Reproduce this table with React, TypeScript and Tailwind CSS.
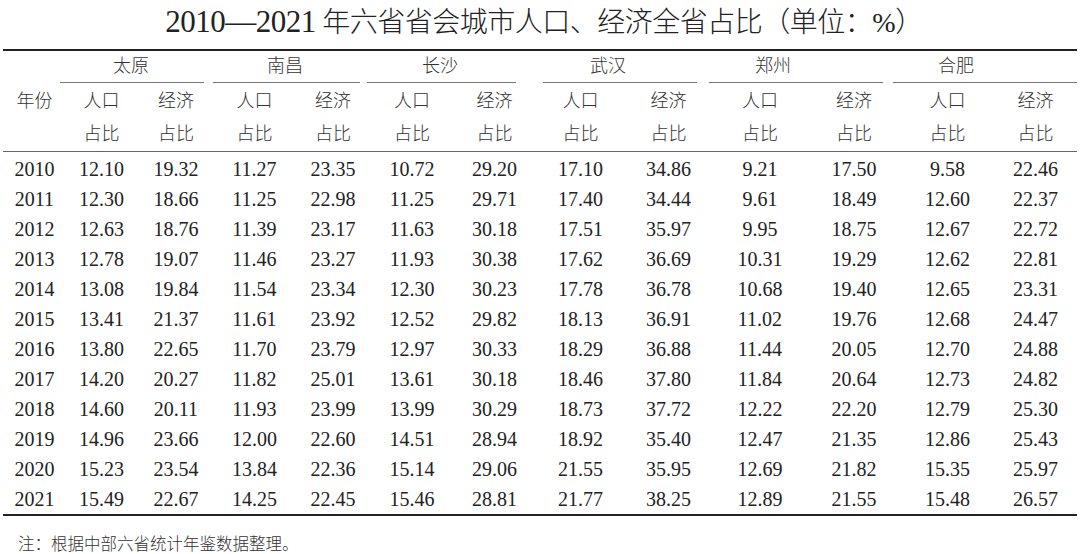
const cities = [
  { name: "太原", gap: "ml-[57px]", w: "w-[144px]", pl: "pl-[53px]" },
  { name: "南昌", gap: "ml-[9px]", w: "w-[147px]", pl: "pl-[54px]" },
  { name: "长沙", gap: "ml-[7px]", w: "w-[149px]", pl: "pl-[55px]" },
  { name: "武汉", gap: "ml-[27px]", w: "w-[154px]", pl: "pl-[47px]" },
  { name: "郑州", gap: "ml-[12px]", w: "w-[174px]", pl: "pl-[46px]" },
  { name: "合肥", gap: "ml-[10px]", w: "w-[184px]", pl: "pl-[45px]" },
];

const rows: string[][] = [
  ["2010", "12.10", "19.32", "11.27", "23.35", "10.72", "29.20", "17.10", "34.86", "9.21", "17.50", "9.58", "22.46"],
  ["2011", "12.30", "18.66", "11.25", "22.98", "11.25", "29.71", "17.40", "34.44", "9.61", "18.49", "12.60", "22.37"],
  ["2012", "12.63", "18.76", "11.39", "23.17", "11.63", "30.18", "17.51", "35.97", "9.95", "18.75", "12.67", "22.72"],
  ["2013", "12.78", "19.07", "11.46", "23.27", "11.93", "30.38", "17.62", "36.69", "10.31", "19.29", "12.62", "22.81"],
  ["2014", "13.08", "19.84", "11.54", "23.34", "12.30", "30.23", "17.78", "36.78", "10.68", "19.40", "12.65", "23.31"],
  ["2015", "13.41", "21.37", "11.61", "23.92", "12.52", "29.82", "18.13", "36.91", "11.02", "19.76", "12.68", "24.47"],
  ["2016", "13.80", "22.65", "11.70", "23.79", "12.97", "30.33", "18.29", "36.88", "11.44", "20.05", "12.70", "24.88"],
  ["2017", "14.20", "20.27", "11.82", "25.01", "13.61", "30.18", "18.46", "37.80", "11.84", "20.64", "12.73", "24.82"],
  ["2018", "14.60", "20.11", "11.93", "23.99", "13.99", "30.29", "18.73", "37.72", "12.22", "22.20", "12.79", "25.30"],
  ["2019", "14.96", "23.66", "12.00", "22.60", "14.51", "28.94", "18.92", "35.40", "12.47", "21.35", "12.86", "25.43"],
  ["2020", "15.23", "23.54", "13.84", "22.36", "15.14", "29.06", "21.55", "35.95", "12.69", "21.82", "15.35", "25.97"],
  ["2021", "15.49", "22.67", "14.25", "22.45", "15.46", "28.81", "21.77", "38.25", "12.89", "21.55", "15.48", "26.57"],
];

const grid =
  "grid grid-cols-[63px_71px_78px_79px_78px_80px_85px_87px_89px_94px_94px_93px_83px]";

export default function App() {
  return (
    <div className="w-[1080px] h-[554px] bg-white text-[#222] font-light font-['Liberation_Serif','Noto_Sans_CJK_SC',serif] overflow-hidden">
      <h1 className="h-[49px] pt-px text-center text-[28px] leading-[42px] font-light tracking-[-0.5px] pl-[8px]">
        <span className="text-[31px]">2010—2021</span> 年六省省会城市人口、经济全省占比（单位：%）
      </h1>

      <div className="ml-[3px] w-[1074px]">
        <div className="border-t-2 border-[#222]" />

        <div className="flex h-[32px] text-[18px] text-[#333]">
          {cities.map((c) => (
            <div key={c.name} className={`${c.gap} ${c.w} ${c.pl} border-b border-[#777] leading-[31px]`}>
              {c.name}
            </div>
          ))}
        </div>

        <div className={`${grid} h-[35px] items-center text-center text-[18px] text-[#333] pt-px`}>
          <div>年份</div>
          {cities.map((c) => [
            <div key={c.name + "p"}>人口</div>,
            <div key={c.name + "e"}>经济</div>,
          ])}
        </div>
        <div className={`${grid} h-[33px] items-center text-center text-[18px] text-[#333]`}>
          <div />
          {cities.map((c) => [
            <div key={c.name + "p"}>占比</div>,
            <div key={c.name + "e"}>占比</div>,
          ])}
        </div>

        <div className="border-t border-[#666] pt-[2px]">
          {rows.map((r) => (
            <div key={r[0]} className={`${grid} h-[30px] text-center text-[20px] leading-[30px]`}>
              {r.map((v, i) => (
                <div key={i}>{v}</div>
              ))}
            </div>
          ))}
        </div>

        <div className="border-t-2 border-[#222]" />
      </div>

      <p className="pl-[18px] pt-[19px] text-[16.5px] leading-[20px] text-[#333]">注：根据中部六省统计年鉴数据整理。</p>
    </div>
  );
}
